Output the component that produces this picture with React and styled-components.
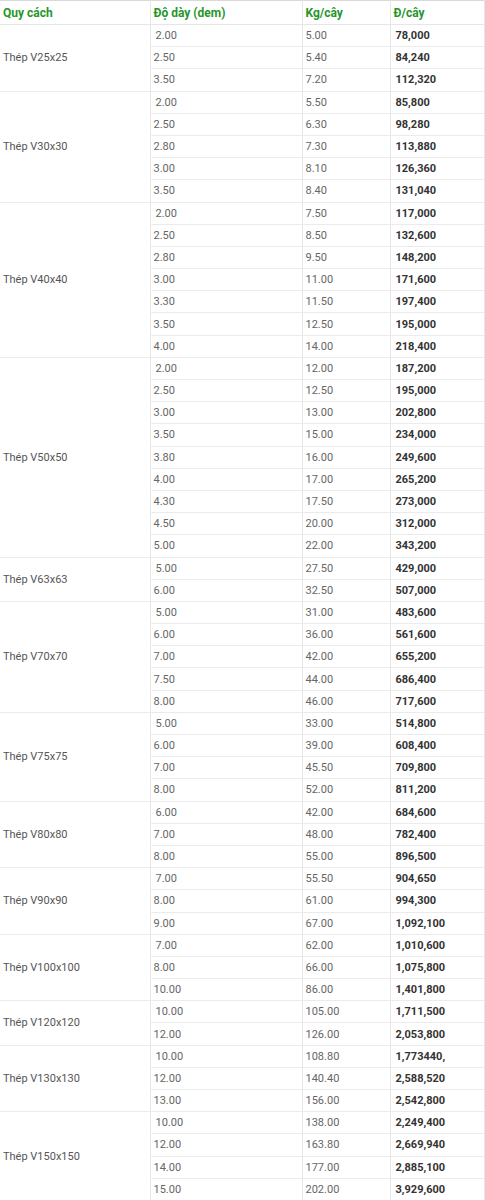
import styled, { createGlobalStyle } from 'styled-components';

const GlobalStyle = createGlobalStyle`
  html, body {
    margin: 0;
    padding: 0;
    background: #fff;
  }
  body {
    font-family: Roboto, "Liberation Sans", Arial, sans-serif;
  }
`;

const groups = [
  ['Thép V25x25', [['2.00', '5.00', '78,000'], ['2.50', '5.40', '84,240'], ['3.50', '7.20', '112,320']]],
  ['Thép V30x30', [['2.00', '5.50', '85,800'], ['2.50', '6.30', '98,280'], ['2.80', '7.30', '113,880'], ['3.00', '8.10', '126,360'], ['3.50', '8.40', '131,040']]],
  ['Thép V40x40', [['2.00', '7.50', '117,000'], ['2.50', '8.50', '132,600'], ['2.80', '9.50', '148,200'], ['3.00', '11.00', '171,600'], ['3.30', '11.50', '197,400'], ['3.50', '12.50', '195,000'], ['4.00', '14.00', '218,400']]],
  ['Thép V50x50', [['2.00', '12.00', '187,200'], ['2.50', '12.50', '195,000'], ['3.00', '13.00', '202,800'], ['3.50', '15.00', '234,000'], ['3.80', '16.00', '249,600'], ['4.00', '17.00', '265,200'], ['4.30', '17.50', '273,000'], ['4.50', '20.00', '312,000'], ['5.00', '22.00', '343,200']]],
  ['Thép V63x63', [['5.00', '27.50', '429,000'], ['6.00', '32.50', '507,000']]],
  ['Thép V70x70', [['5.00', '31.00', '483,600'], ['6.00', '36.00', '561,600'], ['7.00', '42.00', '655,200'], ['7.50', '44.00', '686,400'], ['8.00', '46.00', '717,600']]],
  ['Thép V75x75', [['5.00', '33.00', '514,800'], ['6.00', '39.00', '608,400'], ['7.00', '45.50', '709,800'], ['8.00', '52.00', '811,200']]],
  ['Thép V80x80', [['6.00', '42.00', '684,600'], ['7.00', '48.00', '782,400'], ['8.00', '55.00', '896,500']]],
  ['Thép V90x90', [['7.00', '55.50', '904,650'], ['8.00', '61.00', '994,300'], ['9.00', '67.00', '1,092,100']]],
  ['Thép V100x100', [['7.00', '62.00', '1,010,600'], ['8.00', '66.00', '1,075,800'], ['10.00', '86.00', '1,401,800']]],
  ['Thép V120x120', [['10.00', '105.00', '1,711,500'], ['12.00', '126.00', '2,053,800']]],
  ['Thép V130x130', [['10.00', '108.80', '1,773440,'], ['12.00', '140.40', '2,588,520'], ['13.00', '156.00', '2,542,800']]],
  ['Thép V150x150', [['10.00', '138.00', '2,249,400'], ['12.00', '163.80', '2,669,940'], ['14.00', '177.00', '2,885,100'], ['15.00', '202.00', '3,929,600']]],
];

export default function App() {
  return (
    <>
      <GlobalStyle />
      <Table>
        <colgroup>
          <col style={{ width: 150 }} />
          <col style={{ width: 152 }} />
          <col style={{ width: 88 }} />
          <col />
        </colgroup>
        <thead>
          <tr>
            <Head>Quy cách</Head>
            <Head>Độ dày (dem)</Head>
            <Head>Kg/cây</Head>
            <Head>Đ/cây</Head>
          </tr>
        </thead>
        <tbody>
          {groups.map(([name, rows]) =>
            rows.map(([thick, kg, price], i) => (
              <Row key={name + i}>
                {i === 0 && <Name rowSpan={rows.length}>{name}</Name>}
                <Cell $lead={i === 0}>{thick}</Cell>
                <Cell>{kg}</Cell>
                <Price>{price}</Price>
              </Row>
            ))
          )}
        </tbody>
      </Table>
    </>
  );
}

const Table = styled.table`
  width: 485px;
  table-layout: fixed;
  border-collapse: collapse;
  border-top: 1px solid #d9d9d9;
  border-right: 1px solid #e6e6e6;
  font-size: 11px;
  color: #666;
`;

const Head = styled.th`
  height: 23px;
  padding: 0 3px;
  text-align: left;
  font-size: 12px;
  font-weight: 700;
  color: #27962a;
  border-bottom: 1px solid #e6e6e6;
  border-left: 1px solid #e6e6e6;

  &:first-child {
    border-left: none;
  }
`;

const Row = styled.tr`
  height: 22.2px;
`;

const Cell = styled.td`
  padding: 0 3px 0 ${(p) => (p.$lead ? '5px' : '3px')};
  border-bottom: 1px solid #ebebeb;
  border-left: 1px solid #e6e6e6;
  white-space: nowrap;
`;

const Name = styled(Cell)`
  padding-left: 3px;
  border-left: none;
  color: #555;
`;

const Price = styled(Cell)`
  padding-left: 5px;
  font-weight: 700;
  color: #333;
`;
